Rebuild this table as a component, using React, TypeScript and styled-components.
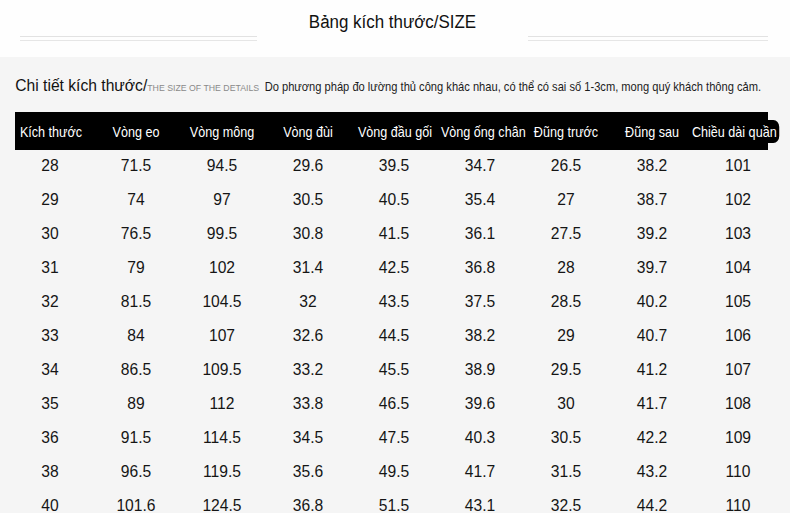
import React from "react";
import styled, { createGlobalStyle } from "styled-components";

const Global = createGlobalStyle`
  html, body { margin: 0; padding: 0; background: #f5f5f5; }
  body { font-family: "Liberation Sans", Arial, sans-serif; color: #111; }
`;

const Page = styled.div`
  width: 790px;
  height: 513px;
  overflow: hidden;
  display: flex;
  flex-direction: column;
  background: #f5f5f5;
`;

const TitleBar = styled.header`
  flex-shrink: 0;
  height: 57px;
  background: #fefefe;
  display: grid;
  grid-template-columns: 20px 237px 1fr 240px 22px;
  align-items: start;
`;

const DoubleLine = styled.div<{ $col: number }>`
  grid-column: ${(p) => p.$col};
  margin-top: 36px;
  height: 3px;
  border-top: 1px solid #e2e2e2;
  border-bottom: 1px solid #e6e6e6;
`;

const Title = styled.h1`
  grid-column: 3;
  margin: 11px 0 0;
  text-align: center;
  font-weight: normal;
  font-size: 18px;
  line-height: 22px;
  color: #111;
  white-space: nowrap;
  transform: scaleX(0.94);
`;

const Content = styled.section`
  flex: 1;
  min-height: 0;
  display: flex;
  flex-direction: column;
  padding: 19px 0 0 7px;
`;

const Subtitle = styled.div`
  flex-shrink: 0;
  display: flex;
  align-items: baseline;
  padding-left: 9px;
  height: 20px;
  line-height: 20px;
  white-space: nowrap;
  transform: scaleX(0.92);
  transform-origin: 0 50%;
`;

const SubMain = styled.span`
  font-size: 17px;
  color: #111;
`;

const SubSmall = styled.span`
  font-size: 9.5px;
  color: #8a8a8a;
  margin-right: 6px;
`;

const SubNote = styled.span`
  font-size: 12.1px;
  color: #1c1c1c;
`;

const Table = styled.div`
  flex-shrink: 0;
  margin-top: 16px;
  width: 774px;
  display: flex;
  flex-direction: column;
`;

const HeaderRow = styled.div`
  display: grid;
  grid-template-columns: repeat(9, 86px);
  height: 38px;
  align-items: center;
  background: linear-gradient(
    to right,
    transparent 8px,
    #000 8px,
    #000 761px,
    transparent 761px
  );
`;

const HeadCell = styled.div<{ $shift?: number }>`
  color: #fff;
  font-size: 15px;
  text-align: center;
  white-space: nowrap;
  transform: translateX(${(p) => p.$shift ?? 0}px) scaleX(0.84);
`;

const LastHead = styled.span`
  background: #000;
  border-radius: 0 7px 7px 0;
  padding: 3px 3px 3px 0;
`;

const Row = styled.div`
  display: grid;
  grid-template-columns: repeat(9, 86px);
  height: 34px;
  padding-bottom: 2px;
  box-sizing: border-box;
  align-items: center;
`;

const Cell = styled.div`
  font-size: 17px;
  text-align: center;
  color: #151515;
  transform: scaleX(0.92);
`;

const headers = [
  "Kích thước",
  "Vòng eo",
  "Vòng mông",
  "Vòng đùi",
  "Vòng đầu gối",
  "Vòng ống chân",
  "Đũng trước",
  "Đũng sau",
];

const headShift = [1, 0, 0, 0, 0, -3, 0, 0];

const rows: string[][] = [
  ["28", "71.5", "94.5", "29.6", "39.5", "34.7", "26.5", "38.2", "101"],
  ["29", "74", "97", "30.5", "40.5", "35.4", "27", "38.7", "102"],
  ["30", "76.5", "99.5", "30.8", "41.5", "36.1", "27.5", "39.2", "103"],
  ["31", "79", "102", "31.4", "42.5", "36.8", "28", "39.7", "104"],
  ["32", "81.5", "104.5", "32", "43.5", "37.5", "28.5", "40.2", "105"],
  ["33", "84", "107", "32.6", "44.5", "38.2", "29", "40.7", "106"],
  ["34", "86.5", "109.5", "33.2", "45.5", "38.9", "29.5", "41.2", "107"],
  ["35", "89", "112", "33.8", "46.5", "39.6", "30", "41.7", "108"],
  ["36", "91.5", "114.5", "34.5", "47.5", "40.3", "30.5", "42.2", "109"],
  ["38", "96.5", "119.5", "35.6", "49.5", "41.7", "31.5", "43.2", "110"],
  ["40", "101.6", "124.5", "36.8", "51.5", "43.1", "32.5", "44.2", "110"],
];

export default function App() {
  return (
    <Page>
      <Global />
      <TitleBar>
        <DoubleLine $col={2} />
        <Title>Bảng kích thước/SIZE</Title>
        <DoubleLine $col={4} />
      </TitleBar>
      <Content>
        <Subtitle>
          <SubMain>Chi tiết kích thước/</SubMain>
          <SubSmall>THE SIZE OF THE DETAILS</SubSmall>
          <SubNote>
            Do phương pháp đo lường thủ công khác nhau, có thể có sai số 1-3cm, mong quý khách thông cảm.
          </SubNote>
        </Subtitle>
        <Table>
          <HeaderRow>
            {headers.map((h, i) => (
              <HeadCell key={h} $shift={headShift[i]}>
                {h}
              </HeadCell>
            ))}
            <HeadCell $shift={-10}>
              Chiều dài <LastHead>quần</LastHead>
            </HeadCell>
          </HeaderRow>
          {rows.map((r) => (
            <Row key={r[0]}>
              {r.map((v, i) => (
                <Cell key={i}>{v}</Cell>
              ))}
            </Row>
          ))}
        </Table>
      </Content>
    </Page>
  );
}
